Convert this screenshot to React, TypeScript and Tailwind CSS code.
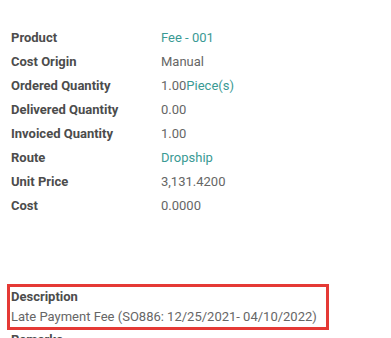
import React from 'react';

const rows: { label: string; value: React.ReactNode }[] = [
  { label: 'Product', value: <span className="text-[#3a9a94]">Fee - 001</span> },
  { label: 'Cost Origin', value: 'Manual' },
  {
    label: 'Ordered Quantity',
    value: (
      <>
        1.00<span className="text-[#3a9a94]">Piece(s)</span>
      </>
    ),
  },
  { label: 'Delivered Quantity', value: '0.00' },
  { label: 'Invoiced Quantity', value: '1.00' },
  { label: 'Route', value: <span className="text-[#3a9a94]">Dropship</span> },
  { label: 'Unit Price', value: '3,131.4200' },
  { label: 'Cost', value: '0.0000' },
];

export default function App() {
  return (
    <div className="w-[391px] h-[338px] overflow-hidden bg-white font-['Roboto',sans-serif] text-[13px] text-[#666666]">
      <div className="pt-[26px] pl-[11px]">
        {rows.map((r) => (
          <div key={r.label} className="flex h-6 items-center">
            <div className="w-[150px] font-bold text-[#4c4c4c]">{r.label}</div>
            <div>{r.value}</div>
          </div>
        ))}
      </div>

      <div className="mt-[66px] ml-[7px] w-[322px] border-[3px] border-[#e53935] px-[1px] leading-5">
        <div className="font-bold text-[#4c4c4c]">Description</div>
        <div>Late Payment Fee (SO886: 12/25/2021- 04/10/2022)</div>
      </div>
      <div className="pl-[11px] font-bold leading-5 text-[#4c4c4c]">Remarks</div>
    </div>
  );
}
